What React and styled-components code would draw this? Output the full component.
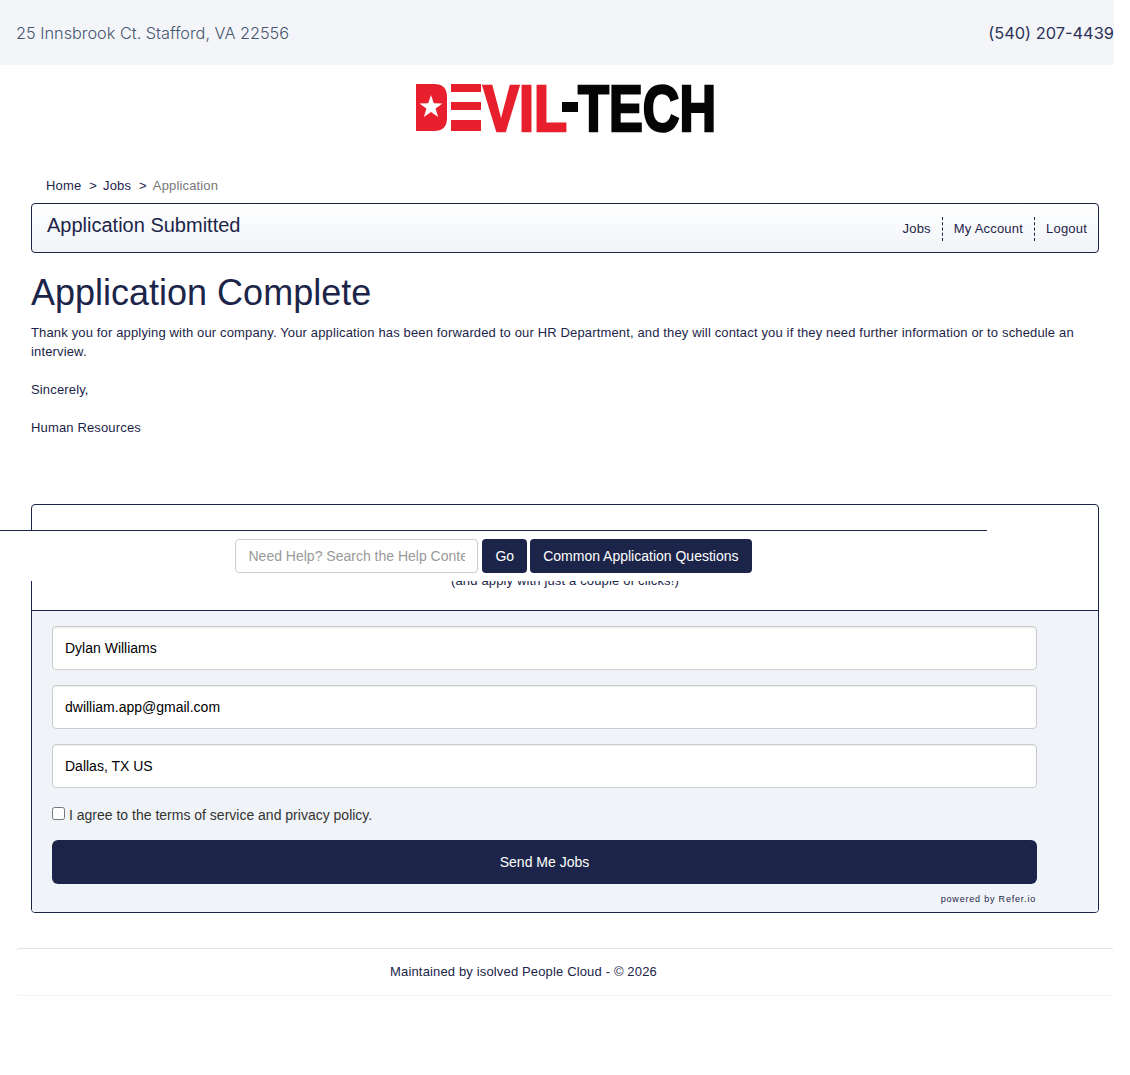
import styled, { createGlobalStyle } from 'styled-components';

const NAVY = '#1c2549';

const GlobalStyle = createGlobalStyle`
    html, body {
        margin: 0;
        padding: 0;
        background: #fff;
    }
    body {
        font-family: "Liberation Sans", Arial, sans-serif;
        font-size: 13px;
        letter-spacing: 0.15px;
        color: ${NAVY};
    }
`;

function Logo() {
    return (
        <svg width="300" height="50" viewBox="0 0 300 50" role="img" aria-label="Devil-Tech">
            <path d="M1 1H19Q32 1 32 14V35Q32 48 19 48H1Z" fill="#e81f2d" />
            <polygon
                points="16,12 18.8,20.2 27.5,20.4 20.6,25.6 23.1,33.9 16,29 8.9,33.9 11.4,25.6 4.5,20.4 13.2,20.2"
                fill="#fff"
            />
            <rect x="36" y="1" width="30" height="8" fill="#e81f2d" />
            <rect x="36" y="19" width="30" height="8" fill="#e81f2d" />
            <rect x="36" y="37" width="30" height="11" fill="#e81f2d" />
            <LogoWord x="68" y="47.5" textLength="84" lengthAdjust="spacingAndGlyphs" $red>
                VIL
            </LogoWord>
            <rect x="147" y="19" width="16" height="10" fill="#050505" />
            <LogoWord x="163" y="47.5" textLength="138" lengthAdjust="spacingAndGlyphs">
                TECH
            </LogoWord>
        </svg>
    );
}

export default function App() {
    return (
        <>
            <GlobalStyle />
            <Page>
                <TopBar>
                    <Address>25 Innsbrook Ct. Stafford, VA 22556</Address>
                    <Phone>(540) 207-4439</Phone>
                </TopBar>

                <Container>
                    <LogoRow>
                        <Logo />
                    </LogoRow>

                    <Content>
                        <Breadcrumbs>
                            <span>Home</span>
                            <Sep>&gt;</Sep>
                            <span>Jobs</span>
                            <Sep>&gt;</Sep>
                            <Current>Application</Current>
                        </Breadcrumbs>

                        <TitleBar>
                            <PageTitle>Application Submitted</PageTitle>
                            <Nav>
                                <NavLink>Jobs</NavLink>
                                <NavLink $divided>My Account</NavLink>
                                <NavLink $divided>Logout</NavLink>
                            </Nav>
                        </TitleBar>

                        <Heading>Application Complete</Heading>
                        <Copy>
                            Thank you for applying with our company. Your application has been forwarded to
                            our HR Department, and they will contact you if they need further information or
                            to schedule an interview.
                        </Copy>
                        <Copy>Sincerely,</Copy>
                        <Copy>Human Resources</Copy>

                        <SignupCard>
                            <CardHead>(and apply with just a couple of clicks!)</CardHead>
                            <CardBody>
                                <Field defaultValue="Dylan Williams" />
                                <Field defaultValue="dwilliam.app@gmail.com" />
                                <Field defaultValue="Dallas, TX US" />
                                <Agree>
                                    <Check type="checkbox" />I agree to the terms of service and privacy policy.
                                </Agree>
                                <SendButton>Send Me Jobs</SendButton>
                                <Powered>powered by Refer.io</Powered>
                            </CardBody>
                        </SignupCard>
                    </Content>

                    <Footer>Maintained by isolved People Cloud - © 2026</Footer>
                </Container>

                <HelpBar>
                    <HelpInput placeholder="Need Help? Search the Help Content" />
                    <HelpButton $gap="4px">Go</HelpButton>
                    <HelpButton $gap="3px">Common Application Questions</HelpButton>
                </HelpBar>
            </Page>
        </>
    );
}

const Page = styled.div`
    position: relative;
    width: 1114px;
    min-height: 1075px;
`;

const TopBar = styled.header`
    height: 65px;
    box-sizing: border-box;
    padding-left: 16px;
    background: #f3f5f9;
    display: flex;
    align-items: center;
    justify-content: space-between;
    letter-spacing: 0;
`;

const Address = styled.div`
    font-family: Inter, sans-serif;
    font-size: 16.3px;
    font-weight: 300;
    color: #47566f;
`;

const Phone = styled.div`
    font-family: Inter, sans-serif;
    font-size: 16.4px;
    color: #2b3358;
`;

const Container = styled.div`
    margin-left: 16px;
`;

const LogoRow = styled.div`
    height: 105px;
    padding-top: 18px;
    box-sizing: border-box;
    display: flex;
    justify-content: center;
`;

const LogoWord = styled.text`
    font-family: "Liberation Sans Narrow", "Liberation Sans", sans-serif;
    font-weight: 700;
    font-size: 64px;
    letter-spacing: 0;
    fill: ${(p) => (p.$red ? '#e81f2d' : '#050505')};
    stroke: ${(p) => (p.$red ? '#e81f2d' : '#050505')};
    stroke-width: 2.5px;
`;

const Content = styled.main`
    padding: 0 15px;
`;

const Breadcrumbs = styled.nav`
    height: 33px;
    padding: 0 0 2px 15px;
    box-sizing: border-box;
    display: flex;
    align-items: center;
`;

const Sep = styled.span`
    margin: 0 6px 0 8px;
`;

const Current = styled.span`
    color: #777;
`;

const TitleBar = styled.div`
    height: 50px;
    box-sizing: border-box;
    border: 1px solid ${NAVY};
    border-radius: 4px;
    background: linear-gradient(#fff, #f0f3f7);
    padding: 0 0 0 15px;
    display: flex;
    align-items: center;
    justify-content: space-between;
`;

const PageTitle = styled.h2`
    margin: 0 0 5px;
    font-size: 20px;
    font-weight: 400;
    letter-spacing: 0;
`;

const Nav = styled.div`
    display: flex;
    align-items: center;
    margin-top: 1px;
`;

const NavLink = styled.span`
    height: 24px;
    line-height: 24px;
    padding: 0 11px;
    letter-spacing: 0.2px;
    border-left: ${(p) => (p.$divided ? `1px dashed ${NAVY}` : '0')};
`;

const Heading = styled.h1`
    margin: 16px 0 6px;
    font-size: 36px;
    line-height: 48px;
    font-weight: 400;
    letter-spacing: 0;
`;

const Copy = styled.p`
    margin: 0 0 19px;
    line-height: 19px;
`;

const SignupCard = styled.section`
    margin-top: 67px;
    border: 1px solid ${NAVY};
    border-radius: 4px;
    overflow: hidden;
`;

const CardHead = styled.div`
    height: 106px;
    box-sizing: border-box;
    padding-top: 68px;
    text-align: center;
    line-height: 16px;
    border-bottom: 1px solid ${NAVY};
`;

const CardBody = styled.div`
    background: #f0f3f7;
    padding: 15px 61px 7px 20px;
    display: flex;
    flex-direction: column;
`;

const Field = styled.input`
    height: 44px;
    box-sizing: border-box;
    margin-bottom: 15px;
    padding: 0 12px;
    border: 1px solid #ccc;
    border-radius: 4px;
    background: #fff;
    font-family: "Liberation Sans", sans-serif;
    font-size: 14px;
    letter-spacing: 0;
    color: #000;
    box-shadow: inset 0 1px 1px rgba(0, 0, 0, 0.075);
`;

const Agree = styled.label`
    display: flex;
    align-items: center;
    height: 20px;
    margin: 2px 0 15px;
    font-size: 14px;
    letter-spacing: 0;
    color: #333;
`;

const Check = styled.input`
    margin: 0 4px 4px 0;
    width: 13px;
    height: 13px;
`;

const SendButton = styled.button`
    height: 44px;
    border: 0;
    border-radius: 6px;
    background: ${NAVY};
    color: #fff;
    font-family: "Liberation Sans", sans-serif;
    font-size: 14px;
`;

const Powered = styled.div`
    margin-top: 9px;
    text-align: right;
    font-size: 9px;
    line-height: 12px;
    letter-spacing: 0.8px;
    padding-right: 1px;
`;

const Footer = styled.footer`
    margin-top: 35px;
    height: 48px;
    box-sizing: border-box;
    padding: 0 83px 2px 0;
    border-top: 1px solid #e3e3e3;
    border-bottom: 1px solid #f3f3f3;
    border-radius: 4px;
    display: flex;
    align-items: center;
    justify-content: center;
`;

const HelpBar = styled.div`
    position: absolute;
    left: 0;
    top: 530px;
    width: 987px;
    height: 51px;
    box-sizing: border-box;
    border-top: 1px solid ${NAVY};
    background: #fff;
    padding-top: 8px;
    display: flex;
    justify-content: center;
    align-items: flex-start;
`;

const HelpInput = styled.input`
    width: 243px;
    height: 34px;
    box-sizing: border-box;
    padding: 0 12px;
    border: 1px solid #ccc;
    border-radius: 4px;
    font-family: "Liberation Sans", sans-serif;
    font-size: 14px;
    letter-spacing: 0;
    &::placeholder {
        color: #999;
    }
`;

const HelpButton = styled.button`
    height: 34px;
    margin-left: ${(p) => p.$gap};
    padding: 0 13px;
    border: 0;
    border-radius: 4px;
    background: ${NAVY};
    color: #fff;
    font-family: "Liberation Sans", sans-serif;
    font-size: 14px;
    letter-spacing: 0;
`;
